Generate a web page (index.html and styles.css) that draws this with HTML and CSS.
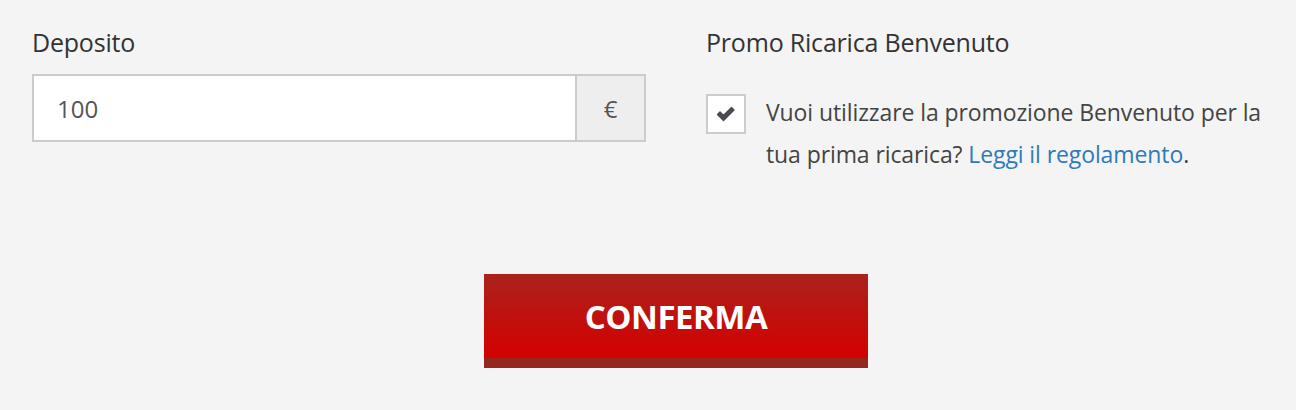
FILE: index.html
```html
<!DOCTYPE html>
<html lang="it">
<head>
<meta charset="utf-8">
<title>Deposito</title>
<link rel="stylesheet" href="styles.css">
</head>
<body>
<div class="page">
  <form class="form">
    <div class="row">
      <div class="col">
        <label class="label" for="dep">Deposito</label>
        <div class="input-group">
          <input id="dep" class="input" type="text" value="100">
          <span class="addon">€</span>
        </div>
      </div>
      <div class="col">
        <div class="label">Promo Ricarica Benvenuto</div>
        <div class="promo">
          <span class="checkbox">
            <svg width="20" height="16" viewBox="0 0 20 16" aria-hidden="true">
              <path d="M1.5 8.5 L4 6 L7.5 9.5 L15.5 1.5 L18 4 L7.5 14.5 Z" fill="#4a4a4f" stroke="#4a4a4f" stroke-width="1.4" stroke-linejoin="round"/>
            </svg>
          </span>
          <p class="promo-text">Vuoi utilizzare la promozione Benvenuto per la tua prima ricarica? <a href="#" class="link">Leggi il regolamento</a>.</p>
        </div>
      </div>
    </div>
    <div class="actions">
      <button type="button" class="btn">CONFERMA</button>
    </div>
  </form>
</div>
</body>
</html>
```
FILE: styles.css
```css
html, body {
  margin: 0;
  padding: 0;
  background: #f4f4f4;
  overflow: hidden;
}
body {
  font-family: "Open Sans", "Noto Sans", sans-serif;
  color: #333;
}
.page {
  padding: 26px 0 0 32px;
  width: 1288px;
}
.row {
  display: grid;
  grid-template-columns: 614px 614px;
  column-gap: 60px;
}
.label {
  display: block;
  font-size: 25px;
  line-height: 32px;
  color: #333;
  margin-bottom: 16px;
  letter-spacing: -0.2px;
}
.input-group {
  display: flex;
  height: 68px;
  box-sizing: border-box;
  border: 2px solid #cccccc;
}
.input {
  flex: 1;
  min-width: 0;
  border: 0;
  margin: 0;
  padding: 0 23px;
  background: #fff;
  font-family: inherit;
  font-size: 24px;
  color: #555;
  outline: none;
}
.addon {
  width: 67px;
  border-left: 2px solid #cccccc;
  background: #eeeeee;
  display: flex;
  align-items: center;
  justify-content: center;
  font-size: 24px;
  color: #555;
}
.promo {
  display: flex;
  align-items: flex-start;
  gap: 20px;
  padding-top: 20px;
}
.checkbox {
  flex: none;
  width: 40px;
  height: 40px;
  box-sizing: border-box;
  border: 2px solid #cccccc;
  background: #fff;
  display: flex;
  align-items: center;
  justify-content: center;
}
.promo-text {
  margin: -3px 0 0;
  width: 520px;
  font-size: 23px;
  line-height: 42px;
  color: #444;
  letter-spacing: -0.1px;
}
.link {
  color: #2f7ab9;
  text-decoration: none;
}
.actions {
  display: flex;
  justify-content: center;
  padding-top: 99px;
}
.btn {
  width: 384px;
  height: 94px;
  border: 0;
  border-bottom: 10px solid #952620;
  background: linear-gradient(to bottom, #aa221c 0%, #d40000 100%);
  color: #fff;
  font-family: "Open Sans", "Noto Sans", sans-serif;
  font-weight: 700;
  font-size: 33px;
  letter-spacing: -0.5px;
  padding: 0;
  cursor: pointer;
}
```
